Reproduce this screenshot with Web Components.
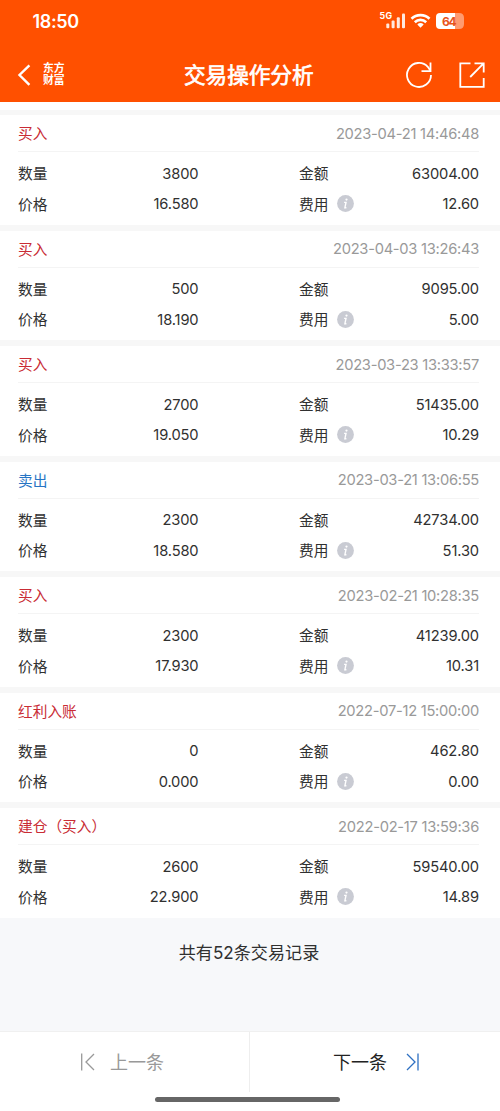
<!DOCTYPE html>
<html lang="zh-CN">
<head>
<meta charset="UTF-8">
<meta name="viewport" content="width=device-width, initial-scale=1">
<title>交易操作分析</title>
<style>
  body {
    margin: 0;
    font-family: Inter, "Noto Sans CJK SC", sans-serif;
    background: #f7f8fa;
    color: #303030;
  }
</style>
</head>
<body>
<trade-page>
  <status-bar slot="header" time="18:50" battery="64"></status-bar>
  <nav-bar slot="header">交易操作分析</nav-bar>
  <trade-card kind="买入" date="2023-04-21 14:46:48" count="3800" amount="63004.00" price="16.580" fee="12.60"></trade-card>
  <trade-card kind="买入" date="2023-04-03 13:26:43" count="500" amount="9095.00" price="18.190" fee="5.00"></trade-card>
  <trade-card kind="买入" date="2023-03-23 13:33:57" count="2700" amount="51435.00" price="19.050" fee="10.29"></trade-card>
  <trade-card class="sell" kind="卖出" date="2023-03-21 13:06:55" count="2300" amount="42734.00" price="18.580" fee="51.30"></trade-card>
  <trade-card kind="买入" date="2023-02-21 10:28:35" count="2300" amount="41239.00" price="17.930" fee="10.31"></trade-card>
  <trade-card kind="红利入账" date="2022-07-12 15:00:00" count="0" amount="462.80" price="0.000" fee="0.00"></trade-card>
  <trade-card kind="建仓（买入）" date="2022-02-17 13:59:36" count="2600" amount="59540.00" price="22.900" fee="14.89"></trade-card>
  <span slot="summary">共有52条交易记录</span>
  <pager-bar slot="footer"></pager-bar>
</trade-page>

<script>
  class TradePage extends HTMLElement {
    constructor() {
      super();
      this.attachShadow({ mode: 'open' });
    }

    connectedCallback() {
      this.shadowRoot.innerHTML = /*html*/`
        <style>
          :host {
            display: flex;
            flex-direction: column;
            height: 1111px;
            overflow: hidden;
          }

          header {
            height: 101.5px;
            background: #ff5000;
            color: #fff;
            flex: none;
          }

          main {
            flex: 1;
          }

          .list {
            display: flex;
            flex-direction: column;
            gap: 5.9px;
            border-top: 8.1px solid #fff;
            padding-top: 5.7px;
            background: #f7f7f7;
          }

          .summary {
            padding-top: 23.5px;
            text-align: center;
            font-size: 17.1px;
            line-height: 24px;
            padding-right: 2px;
          }
        </style>
        <header><slot name="header"></slot></header>
        <main>
          <div class="list"><slot></slot></div>
          <div class="summary"><slot name="summary"></slot></div>
        </main>
        <slot name="footer"></slot>
      `;
    }
  }

  class StatusBar extends HTMLElement {
    constructor() {
      super();
      this.attachShadow({ mode: 'open' });
    }

    connectedCallback() {
      this.shadowRoot.innerHTML = /*html*/`
        <style>
          :host {
            display: flex;
            align-items: center;
            justify-content: space-between;
            box-sizing: border-box;
            height: 48px;
            padding: 0 36px 6px 32.5px;
          }

          .time {
            font-size: 18px;
            font-weight: 600;
            letter-spacing: -0.35px;
          }

          svg {
            display: block;
            margin-bottom: 2px;
          }
        </style>
        <span class="time">${this.getAttribute('time')}</span>
        <svg width="86" height="20" viewBox="378 10 86 20" fill="#fff">
          <text x="379.5" y="19" font-size="8.8" font-weight="700" textLength="12.5">5G</text>
          <g fill="#ffe9df">
            <rect x="386.3" y="23.6" width="3" height="4.6" rx="1"/>
            <rect x="391.6" y="20.6" width="3" height="7.6" rx="1"/>
            <rect x="396.8" y="17.2" width="3" height="11" rx="1"/>
            <rect x="402" y="13.5" width="3" height="14.7" rx="1"/>
          </g>
          <g fill="none" stroke="#fff" stroke-width="2.6">
            <path d="M411.5 18.7a13 13 0 0 1 18 0"/>
            <path d="M414.8 22.2a8.2 8.2 0 0 1 11.4 0"/>
          </g>
          <path d="M420.5 27.8l-3.2-3.2a4.7 4.7 0 0 1 6.4 0z"/>
          <path d="M440 13h15v16h-15q-4 0-4-4v-8q0-4 4-4z"/>
          <path d="M455 13h4q5 0 5 5v6q0 5-5 5h-4z" fill="#ff9b70"/>
          <text x="442" y="25.5" font-size="12" font-weight="700" fill="#e8541a" textLength="14.6">${this.getAttribute('battery')}</text>
        </svg>
      `;
    }
  }

  class NavBar extends HTMLElement {
    constructor() {
      super();
      this.attachShadow({ mode: 'open' });
    }

    connectedCallback() {
      this.shadowRoot.innerHTML = /*html*/`
        <style>
          :host {
            display: grid;
            grid-template-columns: 1fr auto 1fr;
            align-items: center;
            height: 54px;
            padding: 0 14.5px 0 16px;
          }

          h1 {
            margin: 0 4px 0 0;
            font-size: 21.6px;
            font-weight: 400;
            line-height: 30px;
            -webkit-text-stroke: 0.7px #fff;
          }

          .left,
          .right {
            display: flex;
            align-items: center;
          }

          .left {
            gap: 11px;
          }

          .right {
            justify-content: flex-end;
            gap: 24.5px;
          }

          .brand {
            font-size: 10.8px;
            line-height: 12.2px;
            font-weight: 700;
          }

          svg {
            display: block;
            fill: none;
            stroke: #fff;
            stroke-width: 1.8;
          }

          .back {
            stroke-width: 2.4;
          }
        </style>
        <div class="left">
          <svg class="back" width="16" height="24" viewBox="0 0 16 24"><path d="M13.4 2.3L3.5 12l9.9 9.8"/></svg>
          <div class="brand">东方<br>财富</div>
        </div>
        <h1><slot></slot></h1>
        <div class="right">
          <svg width="28" height="28" viewBox="0 0 28 28">
            <path d="M26 14a12 12 0 1 1-3.2-8.2L25.3 9.5"/>
            <path d="M25.5 1.5v8.7h-9"/>
          </svg>
          <svg width="28" height="28" viewBox="0 0 28 28">
            <path d="M12.5 2.4H2.3v23.4h23.4V17M16.5 2.4h9.2v9.2M25.4 2.7L12.2 16"/>
          </svg>
        </div>
      `;
    }
  }

  class TradeCard extends HTMLElement {
    constructor() {
      super();
      this.attachShadow({ mode: 'open' });
    }

    connectedCallback() {
      const value = name => this.getAttribute(name);
      this.shadowRoot.innerHTML = /*html*/`
        <style>
          :host {
            display: block;
            box-sizing: border-box;
            height: 109.6px;
            padding: 0 21px 0 18px;
            background: #fff;
            font-size: 14.7px;
          }

          .head {
            display: flex;
            justify-content: space-between;
            align-items: center;
            box-sizing: border-box;
            height: 37px;
            border-bottom: 1px solid #f4f4f4;
          }

          .kind {
            color: #c92c35;
            margin-top: -1px;
          }

          :host(.sell) .kind {
            color: #2674c4;
          }

          .date {
            color: #999;
            letter-spacing: -0.27px;
            margin-top: 1px;
          }

          .rows {
            display: grid;
            grid-template-columns: 180.5px 1fr;
            column-gap: 100.5px;
            grid-auto-rows: 30.6px;
            padding-top: 6.4px;
          }

          .row {
            display: flex;
            justify-content: space-between;
            align-items: center;
          }

          .label {
            display: flex;
            align-items: center;
            gap: 9px;
            margin-top: -2px;
          }

          .num {
            letter-spacing: -0.14px;
          }

          info-icon {
            margin-top: 1px;
          }
        </style>
        <div class="head">
          <span class="kind">${value('kind')}</span>
          <span class="date">${value('date')}</span>
        </div>
        <div class="rows">
          <div class="row"><span class="label">数量</span><span class="num">${value('count')}</span></div>
          <div class="row"><span class="label">金额</span><span class="num">${value('amount')}</span></div>
          <div class="row"><span class="label">价格</span><span class="num">${value('price')}</span></div>
          <div class="row">
            <span class="label">费用<info-icon></info-icon></span>
            <span class="num">${value('fee')}</span>
          </div>
        </div>
      `;
    }
  }

  class InfoIcon extends HTMLElement {
    constructor() {
      super();
      this.attachShadow({ mode: 'open' });
    }

    connectedCallback() {
      this.shadowRoot.innerHTML = /*html*/`
        <style>
          :host {
            display: block;
            width: 17px;
            height: 17px;
          }

          svg {
            display: block;
          }
        </style>
        <svg width="17" height="17" viewBox="0 0 17 17">
          <circle cx="8.5" cy="8.5" r="8.4" fill="#c9cbd3"/>
          <circle cx="9.5" cy="4.6" r="1.1" fill="#fff"/>
          <path d="M7.1 7.4h1.9l-1.1 5.3h1.5" fill="none" stroke="#fff" stroke-width="1.4"/>
        </svg>
      `;
    }
  }

  class PagerBar extends HTMLElement {
    constructor() {
      super();
      this.attachShadow({ mode: 'open' });
    }

    connectedCallback() {
      this.shadowRoot.innerHTML = /*html*/`
        <style>
          :host {
            display: flex;
            flex-direction: column;
            flex: none;
            height: 79px;
            border-top: 1px solid #f0f0f0;
            background: #fff;
            font-size: 18px;
          }

          .buttons {
            display: grid;
            grid-template-columns: 250px 250px;
            height: 60px;
          }

          .buttons div {
            display: flex;
            align-items: center;
            box-sizing: border-box;
          }

          .buttons span {
            margin-top: -2px;
          }

          .prev {
            gap: 13px;
            padding-left: 80px;
            color: #999;
            border-right: 1px solid #eee;
          }

          .next {
            gap: 19px;
            padding-left: 83px;
            color: #222;
          }

          svg {
            fill: none;
            stroke-width: 1.3;
          }

          .home {
            width: 185px;
            height: 5px;
            margin: 5px 0 0 155px;
            border-radius: 3px;
            background: #666;
          }
        </style>
        <div class="buttons">
          <div class="prev">
            <svg width="17" height="20" viewBox="0 0 17 20" stroke="#999"><path d="M1.7 1.5v17M14 2L6 10l8 8"/></svg>
            <span>上一条</span>
          </div>
          <div class="next">
            <span>下一条</span>
            <svg width="16" height="20" viewBox="0 0 16 20" stroke="#2e70c2"><path d="M1 2l8 8-8 8M12 1.5v17"/></svg>
          </div>
        </div>
        <div class="home"></div>
      `;
    }
  }

  customElements.define('trade-page', TradePage);
  customElements.define('status-bar', StatusBar);
  customElements.define('nav-bar', NavBar);
  customElements.define('info-icon', InfoIcon);
  customElements.define('trade-card', TradeCard);
  customElements.define('pager-bar', PagerBar);
</script>
</body>
</html>
